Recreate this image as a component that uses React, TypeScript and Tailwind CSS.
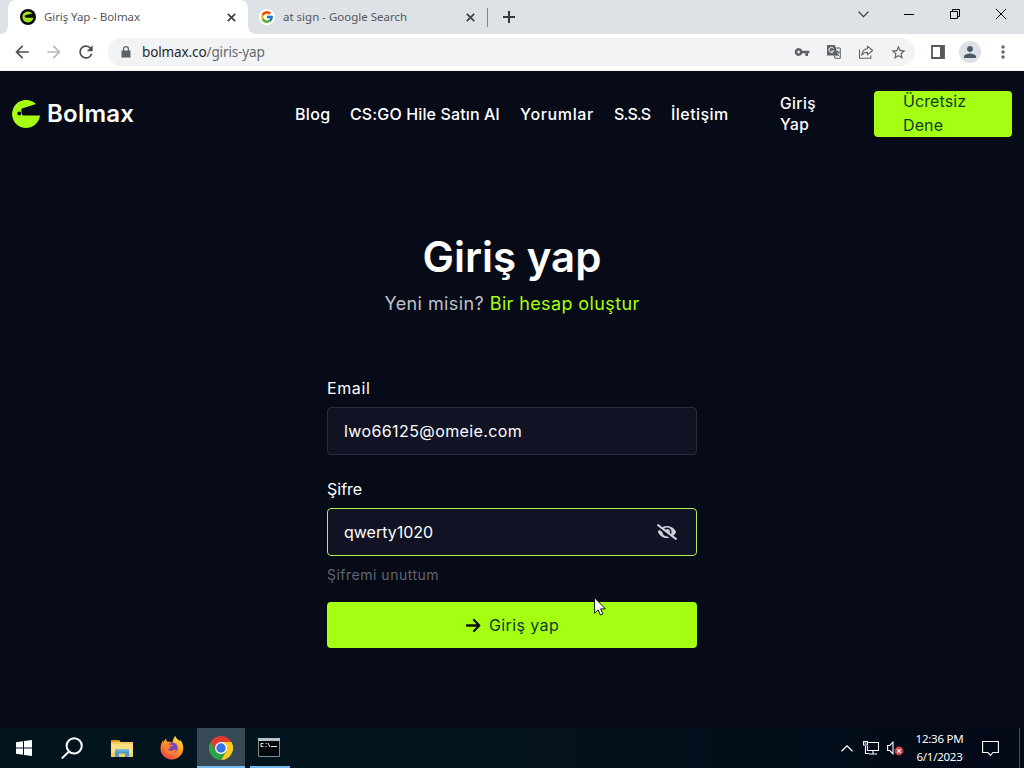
import { useState } from 'react';
import { MdVpnKey, MdStarBorder, MdPerson, MdMoreVert, MdArrowBack, MdArrowForward, MdRefresh } from 'react-icons/md';
import { FaEyeSlash } from 'react-icons/fa';
import { FcGoogle } from 'react-icons/fc';

const navLinks = [
  { name: 'Blog', width: 'w-[35px]', spacing: 'tracking-[0.35px]' },
  { name: 'CS:GO Hile Satın Al', width: 'w-[150px]', spacing: 'tracking-[0.13px]' },
  { name: 'Yorumlar', width: 'w-[74px]', spacing: 'tracking-[0.65px]' },
  { name: 'S.S.S', width: 'w-[37px]', spacing: 'tracking-[-0.9px]' },
  { name: 'İletişim', width: 'w-[58px]', spacing: 'tracking-[0.45px]' },
];

function CloseIcon() {
  return (
    <svg width="9" height="9" viewBox="0 0 9 9" fill="none" stroke="#3c4043" strokeWidth="1.7">
      <path d="M.8.8l7.4 7.4M8.2.8L.8 8.2" />
    </svg>
  );
}

function Favicon() {
  return (
    <svg width="16" height="16" viewBox="0 0 16 16">
      <circle cx="8" cy="8" r="8" fill="#080c10" />
      <path d="M12.3 4.6A5.5 5.5 0 1 0 13.4 8.7H6.2L4.6 7.9l.6-1.6 7.1-1.7z" fill="#a3e31a" />
    </svg>
  );
}

function TabStrip() {
  return (
    <div className="flex h-[34px] bg-[#dee1e6]">
      <div className="w-[8px] shrink-0 bg-white">
        <div className="h-full rounded-br-lg bg-[#dee1e6]" />
      </div>
      <div className="flex w-[240px] shrink-0 items-center rounded-t-lg bg-white pl-3 pr-[12px]">
        <Favicon />
        <span className="ml-2 grow text-[11.5px] tracking-[-0.08px] text-[#53575b]">Giriş Yap - Bolmax</span>
        <CloseIcon />
      </div>
      <div className="w-[8px] shrink-0 bg-white">
        <div className="h-full rounded-bl-lg bg-[#dee1e6]" />
      </div>
      <div className="flex w-[231px] shrink-0 items-center border-r border-transparent pl-[3px] pr-[11px]">
        <span className="flex size-4 items-center justify-center rounded-full bg-white">
          <FcGoogle size={14} />
        </span>
        <span className="ml-2 grow text-[11.5px] tracking-[0px] text-[#53575b]">at sign - Google Search</span>
        <CloseIcon />
      </div>
      <div className="mt-2 h-[19px] w-px shrink-0 bg-[#808387]" />
      <svg className="ml-[15px] mt-[11px]" width="12" height="12" viewBox="0 0 12 12" stroke="#34383c" strokeWidth="2">
        <path d="M6 0v12M0 6h12" />
      </svg>
      <div className="ml-auto flex items-start text-black">
        <svg className="mr-[35px] mt-[11px]" width="11" height="7" viewBox="0 0 11 7" fill="none" stroke="#333" strokeWidth="1.2">
          <path d="M.5.7l5 5 5-5" />
        </svg>
        <svg className="mr-[36px] mt-[14px]" width="10" height="1" viewBox="0 0 10 1">
          <path d="M0 0h10v1H0z" />
        </svg>
        <svg className="mr-[36px] mt-[9px]" width="10" height="10" viewBox="0 0 10 10" fill="none" stroke="#000" strokeWidth="1">
          <path d="M.5 2.5h7v7h-7zM2.5 2.5v-2h7v7h-2" />
        </svg>
        <svg className="mr-[18px] mt-[9px]" width="10" height="10" viewBox="0 0 10 10" fill="none" stroke="#000" strokeWidth="1">
          <path d="M0 0l10 10M10 0L0 10" />
        </svg>
      </div>
    </div>
  );
}

function Toolbar() {
  return (
    <div className="flex h-[37px] items-center border-b border-[#f1f1f1] bg-white pl-3 pr-3 text-[#5f6368]">
      <MdArrowBack size={20} className="text-[#4b4f53]" />
      <MdArrowForward size={20} className="ml-3 text-[#b6b8ba]" />
      <MdRefresh size={20} className="ml-3 text-[#4b4f53]" />
      <div className="ml-3 flex h-[28px] w-[807px] items-center rounded-full bg-[#f1f3f4] pl-[13px] pr-[8px]">
        <svg width="10" height="12" viewBox="0 0 10 12">
          <path d="M.5 4.5h9v7h-9z" fill="#5f6368" />
          <path d="M2.6 5V3a2.4 2.4 0 0 1 4.8 0v2" fill="none" stroke="#5f6368" strokeWidth="1.2" />
        </svg>
        <span className="ml-[11px] grow text-[13.5px] tracking-[-0.12px] text-[#65696d]">
          <span className="text-[#25282b]">bolmax.co</span>/giris-yap
        </span>
        <MdVpnKey size={16} className="mr-4" />
        <svg className="mr-4" width="16" height="16" viewBox="0 0 16 16">
          <path d="M6 4h8.3v10.3H9z" fill="#f1f3f4" stroke="#5f6368" />
          <path d="M1 1h7.8l3.4 10.5H1z" fill="#5f6368" />
          <path d="M7.5 4.4A2.5 2.5 0 1 0 7.7 7H5.4" fill="none" stroke="#fff" strokeWidth="1" />
          <path d="M9 8h5M11.5 6.7V8M13 8c-.5 2-1.7 3.3-3.3 4.3M10.5 9.4l2.8 3" fill="none" stroke="#5f6368" />
        </svg>
        <svg className="mr-4" width="16" height="16" viewBox="0 0 16 16" fill="none" stroke="#5f6368" strokeWidth="1.1">
          <path d="M1.5 5.5v8.8h11.3v-2.8" />
          <path d="M9.4 2.2l5.2 4.3-5.2 4.3V8.2C6.8 8.1 5 9 3.7 11.3 4.1 7.6 6 5 9.4 4.8z" strokeLinejoin="round" />
        </svg>
        <MdStarBorder size={17} />
      </div>
      <svg className="ml-[16px]" width="14" height="14" viewBox="0 0 14 14">
        <path d="M1 1h12v12H1z" fill="none" stroke="#55595d" strokeWidth="1.8" />
        <path d="M9 1h4v12H9z" fill="#55595d" />
      </svg>
      <span className="ml-[14px] flex size-[22px] items-center justify-center rounded-full bg-[#dde1e6]">
        <MdPerson size={18} className="text-[#4a5968]" />
      </span>
      <MdMoreVert size={20} className="-mr-[1px] ml-auto" />
    </div>
  );
}

function Header() {
  return (
    <header className="flex h-[86px] items-center px-3 text-white">
      <svg width="28" height="28" viewBox="0 0 28 28">
        <path d="M24 4.1A14 14 0 1 0 28 15.4H11.5c-1.1 0-1.7-.8-1.9-1.9l-.4-3.4c0-1 .5-1.6 1.5-1.9z" fill="#a4ff12" />
        <circle cx="7.2" cy="13.5" r="1.9" fill="#070a17" />
      </svg>
      <span className="ml-[7px] w-[88px] whitespace-nowrap text-[24px] font-semibold leading-8 tracking-[0.25px]">Bolmax</span>
      <nav className="-mt-px ml-[160px] flex gap-[20px] text-[16px] font-medium leading-6">
        {navLinks.map((link) => (
          <a key={link.name} href="#" className={`whitespace-nowrap ${link.width} ${link.spacing}`}>
            {link.name}
          </a>
        ))}
      </nav>
      <a href="#" className="ml-[51px] w-[40px] text-[15.5px] font-medium leading-[21px] tracking-[0.4px]">
        Giriş Yap
      </a>
      <a href="#" className="ml-auto h-[46px] w-[138px] rounded bg-[#a4ff12] pl-[29px] pr-[40px] text-[16px] leading-6 text-[#123b2b]">
        <span className="-mt-[2px] block tracking-[0.1px]">Ücretsiz Dene</span>
      </a>
    </header>
  );
}

function LoginForm() {
  const [email, setEmail] = useState('lwo66125@omeie.com');
  const [password, setPassword] = useState('qwerty1020');

  return (
    <main className="flex flex-col items-center pt-[72px] text-white">
      <h1 className="text-[42px] font-semibold leading-[56px]">Giriş yap</h1>
      <p className="mt-[5px] text-[18px] leading-7 tracking-[0.42px] text-[#bfc1ca]">
        Yeni misin?{' '}
        <a href="#" className="tracking-[0.38px] text-[#a4ff12]">
          Bir hesap oluştur
        </a>
      </p>
      <form className="mt-[58px] flex w-[370px] flex-col" onSubmit={(e) => e.preventDefault()}>
        <label className="text-[16px] leading-6 tracking-[0.6px]">Email</label>
        <input
          value={email}
          onChange={(e) => setEmail(e.target.value)}
          className="mt-[7px] h-[48px] rounded border border-[#292c39] bg-[#111224] px-4 text-[16px] tracking-[0.4px] outline-none"
        />
        <label className="mt-[22px] text-[16px] leading-6">Şifre</label>
        <div className="mt-[7px] flex h-[48px] items-center rounded border border-[#b8ec54] bg-[#111224] pl-4 pr-[19px]">
          <input
            value={password}
            onChange={(e) => setPassword(e.target.value)}
            className="min-w-0 grow bg-transparent text-[16px] outline-none"
          />
          <FaEyeSlash size={20} className="text-[#cfd0dc]" />
        </div>
        <a href="#" className="mt-[8px] text-[14px] leading-[21px] tracking-[0.5px] text-[#626571]">
          Şifremi unuttum
        </a>
        <button className="mt-[17px] flex h-[46px] items-center justify-center gap-2 rounded bg-[#a4ff12] pb-px text-[16px] text-[#123b2b]">
          <svg width="16" height="16" viewBox="0 0 16 16" fill="none" stroke="#07150d" strokeWidth="2.3" strokeLinecap="round" strokeLinejoin="round">
            <path d="M2 8.5h12M9 3l5.3 5.5L9 14" />
          </svg>
          <span className="tracking-[0.4px]">Giriş yap</span>
        </button>
      </form>
    </main>
  );
}

function Taskbar() {
  return (
    <div className="flex h-[40px] items-stretch bg-linear-to-r from-[#02151e] via-[#03131e] to-[#030817] text-white">
      <div className="flex w-[48px] items-center justify-center">
        <svg width="16" height="16" viewBox="0 0 16 16" fill="#fff">
          <path d="M0 2.2l7-1v6.3H0zM8 1.1L16 0v7.5H8zM0 8.5h7v6.3l-7-1zM8 8.5h8V16l-8-1.1z" />
        </svg>
      </div>
      <div className="flex w-[48px] items-center justify-center">
        <svg width="22" height="22" viewBox="0 0 22 22" fill="none" stroke="#fff" strokeWidth="2">
          <circle cx="13.2" cy="8.8" r="7.6" />
          <path d="M8 14.5L.8 21.4" />
        </svg>
      </div>
      <div className="flex w-[52px] items-center justify-center">
        <svg width="22" height="19" viewBox="0 0 22 19">
          <path d="M0 1h8l1.5 2H22v15H0z" fill="#f4ce65" />
          <path d="M0 1h8l1 2H0z" fill="#d99b25" />
          <path d="M0 5h22v9H0z" fill="#ffdf83" />
          <path d="M4 10.5h14V18h-4v-3.5H8V18H4z" fill="#4f9ccb" />
          <path d="M4 10.5h14v2H4z" fill="#65b3dd" />
        </svg>
      </div>
      <div className="mr-px flex w-[48px] items-center justify-center">
        <svg width="24" height="24" viewBox="0 0 24 24">
          <defs>
            <linearGradient id="fox" x1="0.8" y1="0" x2="0.2" y2="1">
              <stop offset="0" stopColor="#ffe647" />
              <stop offset="0.45" stopColor="#ff9a22" />
              <stop offset="1" stopColor="#f03c4e" />
            </linearGradient>
          </defs>
          <path d="M15.5 0c.5 2.5 3 3.5 4.1 5.3l.3-1.6c2.3 2.2 3.6 5.5 3.4 8.9C23 19 18 23.5 12 23.5S.5 18.7.5 12.4C.5 9.5 1.4 6.9 3.2 4l.2 2.4C4.4 4.4 5 3.4 6.2 2.4c0 1.3.4 2.6 1.2 3.4 2.2-.3 3.7-.1 5 1.1C12.6 4 13.8 1.6 15.5 0z" fill="url(#fox)" />
          <circle cx="12.3" cy="11.8" r="5.4" fill="#7746bd" />
          <path d="M4.5 8.2c2-.8 4.2-.6 5.2.5l3 .2c.1 1-1.8 1.4-2.6 2.1-.4 1.6-1.4 2-2.4 2.5 2 2 5.5 1.8 6.5-.3 1.2.3 1.6.8 1.5 1.7-2.2 3.5-9.2 3.8-10.7.2z" fill="#ff8025" />
        </svg>
      </div>
      <div className="flex w-[48px] items-center justify-center border-b-2 border-[#76b9ed] bg-[#364a55] pt-px">
        <svg width="24" height="24" viewBox="0 0 24 24">
          <path d="M12 0A12 12 0 0 1 22.4 6H12L6.8 15 1.6 6A12 12 0 0 1 12 0z" fill="#e33b2e" />
          <path d="M22.4 6A12 12 0 0 1 12 24l5.2-9L12 6z" fill="#fbc922" />
          <path d="M1.6 6A12 12 0 0 0 12 24l5.2-9H6.8z" fill="#2fa24c" />
          <circle cx="12" cy="12" r="6" fill="#fff" />
          <circle cx="12" cy="12" r="4.7" fill="#3476e8" />
        </svg>
      </div>
      <div className="ml-[5px] flex w-[40px] items-center justify-center border-b-2 border-[#76b9ed] pr-[2px]">
        <svg width="22" height="19" viewBox="0 0 22 19">
          <path d="M.5.5h21v18H.5z" fill="#05080a" stroke="#7e8b90" />
          <path d="M0 0h22v3H0z" fill="#b7c3c7" />
          <path d="M5.5 5.5H3v3h2.5M7.5 5.5h1M7.5 8.5h1M10 5l2 4M13 8.5h6" fill="none" stroke="#e3e7e9" />
        </svg>
      </div>
      <div className="ml-auto flex items-center">
        <svg className="mr-[10px]" width="12" height="7" viewBox="0 0 12 7" fill="none" stroke="#fff" strokeWidth="1.3">
          <path d="M.5 6.3L6 .9l5.5 5.4" />
        </svg>
        <svg className="mr-[8px]" width="16" height="14" viewBox="0 0 16 14" fill="none" stroke="#fff" strokeWidth="1.1">
          <path d="M5.5 1.5h10v8H4.5V5M10 9.5v3M6 13h8M2.5 5v7.5H6M.5.5h4V4h-4zM1.5 2h2" />
        </svg>
        <svg className="mr-[11px]" width="17" height="15" viewBox="0 0 17 15" fill="none">
          <path d="M.6 4.5h2.2L6 1.2v11.6L2.8 9.5H.6z" stroke="#fff" strokeWidth="1.1" />
          <circle cx="12" cy="10" r="4.4" fill="#ce4447" />
          <path d="M10.2 8.2l3.6 3.6M13.8 8.2l-3.6 3.6" stroke="#fff" strokeWidth="1.1" />
        </svg>
        <div className="w-[49px] whitespace-nowrap text-center text-[11.5px] leading-[18px] tracking-[-0.25px]">
          <div>12:36 PM</div>
          <div>6/1/2023</div>
        </div>
        <svg className="ml-[18px] mr-[20px]" width="17" height="17" viewBox="0 0 17 17" fill="none" stroke="#fff" strokeWidth="1.1">
          <path d="M.6 1.5h15.8v11H11l-2.5 2.8L6 12.5H.6z" />
        </svg>
        <div className="mr-[4px] h-[40px] w-px bg-[#47505b]" />
      </div>
    </div>
  );
}

export default function App() {
  return (
    <div className="relative flex h-screen w-[1024px] flex-col overflow-hidden bg-[#070a17] font-['Noto_Sans',sans-serif]">
      <TabStrip />
      <Toolbar />
      <div className="grow font-['Inter',sans-serif]">
        <Header />
        <LoginForm />
      </div>
      <Taskbar />
      {/* Mouse pointer */}
      <svg className="pointer-events-none absolute left-[594px] top-[597px]" width="13" height="20" viewBox="0 0 13 20">
        <path d="M.6.8v15.4l3.5-3.4 2.3 5.2 2.5-1.1-2.3-5h4.8z" fill="#fff" stroke="#111" />
      </svg>
    </div>
  );
}
